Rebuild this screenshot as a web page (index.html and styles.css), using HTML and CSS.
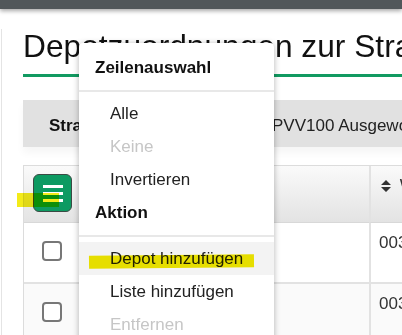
FILE: index.html
```html
<!DOCTYPE html>
<html lang="de">
<head>
    <meta charset="UTF-8">
    <meta name="viewport" content="width=device-width, initial-scale=1.0">
    <title>Depotzuordnungen</title>
    <link rel="stylesheet" href="styles.css">
</head>
<body>
    <div class="topbar"></div>
    <div class="page">
        <h1 class="title">Depotzuordnungen zur Strategie PVV100</h1>
        <div class="info-box">
            <span class="info-label">Strategie:</span>
            <span class="info-value">PVV100 Ausgewogen</span>
        </div>

        <div class="grid">
            <div class="cell head first">
                <button class="menu-btn" type="button">
                    <span></span><span></span><span></span>
                </button>
            </div>
            <div class="cell head">Depot</div>
            <div class="cell head last">
                <svg class="sort" width="10" height="12" viewBox="0 0 10 12"><path d="M5 0 L10 5 L0 5 Z M0 7 L10 7 L5 12 Z" fill="#333"/></svg>
                Wertpapier
            </div>

            <div class="cell first"><span class="check"></span></div>
            <div class="cell">Depot 1</div>
            <div class="cell last">0031245</div>

            <div class="cell first alt"><span class="check"></span></div>
            <div class="cell alt">Depot 2</div>
            <div class="cell last alt">0031288</div>
        </div>
    </div>

    <!-- Kontextmenü der Zeilenauswahl -->
    <div class="ctx-menu">
        <div class="ctx-head">Zeilenauswahl</div>
        <div class="ctx-sep"></div>
        <div class="ctx-item">Alle</div>
        <div class="ctx-item disabled">Keine</div>
        <div class="ctx-item">Invertieren</div>
        <div class="ctx-head">Aktion</div>
        <div class="ctx-sep"></div>
        <div class="ctx-item hover">Depot hinzufügen</div>
        <div class="ctx-item">Liste hinzufügen</div>
        <div class="ctx-item disabled">Entfernen</div>
    </div>

    <div class="marker marker-menu"></div>
    <div class="marker marker-btn"></div>
</body>
</html>
```

FILE: styles.css
```css
body {
    font-family: "Liberation Sans", Arial, sans-serif;
    margin: 0;
    padding: 0;
    background-color: #fff;
    color: #222;
    overflow: hidden;
    height: 335px;
    position: relative;
}
.topbar {
    height: 9px;
    background-color: #51575a;
    box-shadow: 0 2px 4px rgba(0,0,0,0.35);
    position: relative;
    z-index: 1;
}
.page {
    margin-left: 1px;
    border-left: 1px solid #e4e4e4;
    padding-left: 21px;
    width: 700px;
    height: 400px;
}
.title {
    margin: 20px 0 0;
    font-size: 31.7px;
    font-weight: normal;
    line-height: 35px;
    color: #111;
    white-space: nowrap;
    padding-bottom: 10px;
    border-bottom: 3px solid #119a61;
}
.info-box {
    margin-top: 23px;
    background-color: #e1e1e1;
    padding: 16px 26px 11px;
    font-size: 17px;
    line-height: 20px;
    display: flex;
    white-space: nowrap;
    box-shadow: 0 6px 8px rgba(0,0,0,0.04);
}
.info-label {
    font-weight: bold;
    width: 223px;
    color: #111;
}
.info-value {
    color: #222;
}

/* Tabelle */
.grid {
    margin-top: 18px;
    display: grid;
    grid-template-columns: 60px 285px 1fr;
    border-top: 1px solid #dcdcdc;
    border-left: 1px solid #dcdcdc;
    font-size: 17px;
    line-height: 20px;
    color: #333;
}
.cell {
    padding: 10px 8px;
    height: 61px;
    box-sizing: border-box;
    border-bottom: 2px solid #e2e2e2;
}
.cell.head {
    height: 57px;
    background: linear-gradient(#fafafa, #e3e3e3);
    padding: 8px 10px;
    border-bottom: 1px solid #d8d8d8;
}
.cell.last {
    border-left: 2px solid #e2e2e2;
}
.cell.alt {
    background-color: #fafafa;
}
.cell.first {
    padding-left: 18px;
    padding-top: 18px;
}
.cell.head.first {
    padding: 8px 9px;
}
.cell.head.last {
    padding-top: 10px;
}
.sort {
    margin-right: 4px;
    vertical-align: -1px;
}
.menu-btn {
    width: 39px;
    height: 38px;
    background-color: #0d9a62;
    border: 1px solid #3b4a44;
    border-radius: 6px;
    padding: 0;
    display: flex;
    flex-direction: column;
    align-items: center;
    justify-content: center;
    gap: 4px;
}
.menu-btn span {
    display: block;
    width: 20px;
    height: 3px;
    background-color: #fff;
}
.check {
    display: block;
    width: 20px;
    height: 20px;
    box-sizing: border-box;
    border: 2px solid #777;
    border-radius: 4px;
    background: #fff;
}

/* Menü */
.ctx-menu {
    position: absolute;
    left: 79px;
    top: 43px;
    width: 195px;
    height: 320px;
    background-color: #fff;
    border-radius: 4px;
    box-shadow: 0 1px 6px rgba(0,0,0,0.3);
    padding-top: 8px;
    font-size: 17px;
    line-height: 20px;
    z-index: 2;
}
.ctx-head {
    padding: 7px 16px;
    font-weight: bold;
    color: #111;
}
.ctx-sep {
    height: 2px;
    background-color: #e8e8e8;
    margin: 5px 0;
}
.ctx-item {
    height: 33px;
    line-height: 33px;
    padding-left: 31px;
    color: #222;
}
.ctx-item.disabled {
    color: #c6c6c6;
}
.ctx-item.hover {
    background-color: #f3f3f3;
}

/* Textmarker */
.marker {
    position: absolute;
    background-color: #f2e900;
    mix-blend-mode: multiply;
    z-index: 3;
}
.marker-menu {
    left: 89px;
    top: 255px;
    width: 165px;
    height: 13px;
    transform: rotate(-0.6deg);
}
.marker-btn {
    left: 17px;
    top: 193px;
    width: 42px;
    height: 14px;
    opacity: 0.9;
}
```
